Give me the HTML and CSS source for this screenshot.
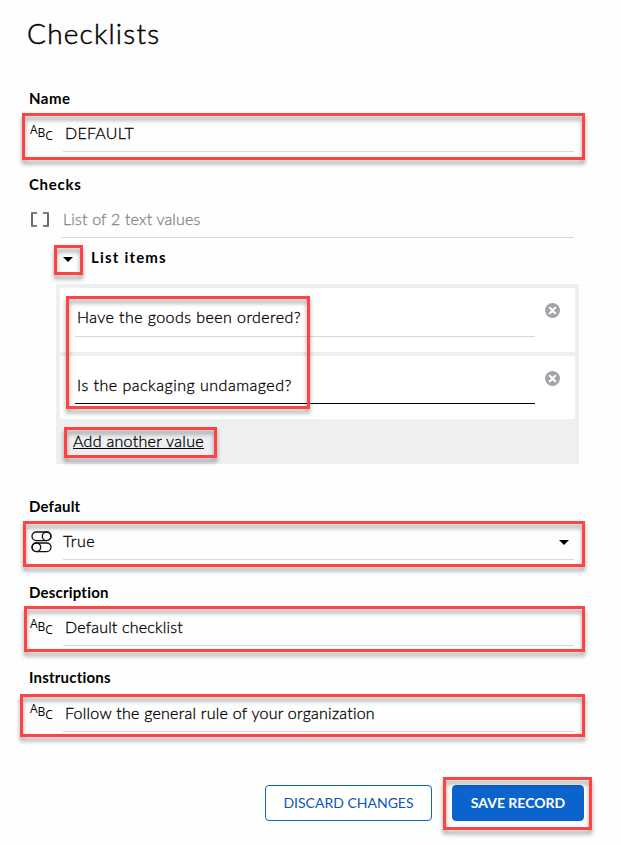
FILE: index.html
```html
<!DOCTYPE html>
<html lang="en">
<head>
<meta charset="utf-8">
<title>Checklists</title>
<link rel="stylesheet" href="styles.css">
</head>
<body>
<svg class="sprite" aria-hidden="true">
  <symbol id="remove" viewBox="0 0 15 15"><circle cx="7.5" cy="7.5" r="7.5" fill="#a2a4aa"/><path d="M4.8 4.8l5.4 5.4M10.2 4.8l-5.4 5.4" stroke="#fff" stroke-width="2.1" stroke-linecap="round"/></symbol>
  <symbol id="caret" viewBox="0 0 10 5"><path d="M0 0h10L5 5z"/></symbol>
</svg>
<main class="page">
  <h1 class="title">Checklists</h1>

  <section class="field name">
    <label class="label l-name">Name</label>
    <div class="row">
      <span class="icon abc"><i>A</i><i>B</i><i>C</i></span>
      <div class="input"><span class="t-default">DEFAULT</span></div>
    </div>
    <div class="mark mark-name"></div>
  </section>

  <section class="field checks">
    <label class="label l-checks">Checks</label>
    <div class="row">
      <span class="icon"><svg class="brackets" viewBox="0 0 18 15"><path d="M6 1H1v13h5M12 1h5v13h-5"/></svg></span>
      <div class="input tight muted"><span class="t-list">List of 2 text values</span></div>
    </div>
  </section>

  <div class="toggle">
    <svg class="caret"><use href="#caret"/></svg>
    <span class="t-items">List items</span>
    <div class="mark mark-toggle"></div>
  </div>

  <div class="list">
    <div class="item">
      <div class="value"><span class="t-have">Have the goods been ordered?</span></div>
      <svg class="remove"><use href="#remove"/></svg>
    </div>
    <div class="item last">
      <div class="value active"><span class="t-is">Is the packaging undamaged?</span></div>
      <svg class="remove"><use href="#remove"/></svg>
    </div>
    <a class="add"><span class="t-add">Add another value</span></a>
    <div class="mark mark-values"></div>
    <div class="mark mark-add"></div>
  </div>

  <section class="field default">
    <label class="label l-default">Default</label>
    <div class="row">
      <span class="icon"><svg class="switches" viewBox="0 0 21 22"><rect x="1" y="1" width="19" height="8.6" rx="4.3"/><circle cx="15.6" cy="5.3" r="4.3"/><rect x="1" y="12" width="19" height="8.6" rx="4.3"/><circle cx="5.4" cy="16.3" r="4.3"/></svg></span>
      <div class="input select"><span class="t-true">True</span><svg class="caret"><use href="#caret"/></svg></div>
    </div>
    <div class="mark mark-default"></div>
  </section>

  <section class="field description">
    <label class="label l-desc">Description</label>
    <div class="row">
      <span class="icon abc"><i>A</i><i>B</i><i>C</i></span>
      <div class="input"><span class="t-desc">Default checklist</span></div>
    </div>
    <div class="mark mark-desc"></div>
  </section>

  <section class="field instructions">
    <label class="label l-instr">Instructions</label>
    <div class="row">
      <span class="icon abc"><i>A</i><i>B</i><i>C</i></span>
      <div class="input"><span class="t-follow">Follow the general rule of your organization</span></div>
    </div>
    <div class="mark mark-instr"></div>
  </section>

  <div class="actions">
    <button class="btn discard">DISCARD CHANGES</button>
    <button class="btn save">SAVE RECORD</button>
    <div class="mark mark-save"></div>
  </div>
</main>
</body>
</html>
```
FILE: styles.css
```css
* { box-sizing: border-box; }
body { margin: 0; background: #fefefe; color: #000; font: 300 16px/20px Lato, "Open Sans", sans-serif; white-space: nowrap; }
.sprite { display: none; }
.page { width: 621px; height: 845px; overflow: hidden; display: flex; flex-direction: column; }
.title { margin: 13px 0 35px 27px; height: 40px; font-size: 28px; line-height: 40px; font-weight: 300; letter-spacing: 1.2px; -webkit-text-stroke: 0.5px #000; }

.field { position: relative; flex: none; margin: 0 47px 22px 29px; }
.label { display: block; height: 20px; font-size: 15px; font-weight: 700; letter-spacing: 0.2px; }
.l-name { letter-spacing: 0.5px; }
.l-checks { letter-spacing: 0.7px; }
.row { display: flex; height: 44px; }
.icon { width: 34px; flex: none; padding-top: 15px; }
.input { flex: 1; padding: 15px 0 0 2px; border-bottom: 1px solid #d8d8db; }
.tight { margin-left: -2px; }
.muted { color: #858585; }
.input span, .value span, .add span { -webkit-text-stroke: 0.3px currentColor; }

.t-default { letter-spacing: 0.25px; }
.t-list { letter-spacing: 0.17px; }
.t-add { letter-spacing: 0.3px; }
.t-desc { letter-spacing: 0.18px; }
.t-follow { letter-spacing: 0.25px; }
.t-true { letter-spacing: 0.5px; }
.t-have { letter-spacing: 0.43px; }
.t-is { letter-spacing: 0.5px; }
.t-items { letter-spacing: 1.2px; }

.abc { display: flex; padding-left: 1px; font: 400 12px/16px "Open Sans", sans-serif; }
.abc i { font-style: normal; }
.abc i:nth-child(1) { margin-top: -1px; }
.abc i:nth-child(2) { margin-top: 2px; }
.abc i:nth-child(3) { margin-top: 5px; }
.brackets { display: block; width: 18px; height: 15px; margin: 3px 0 0 2px; fill: none; stroke: #555; stroke-width: 1.7; }
.switches { display: block; width: 21px; height: 22px; margin: 0 0 0 2px; fill: none; stroke: #111; stroke-width: 1.3; }
.caret { display: block; width: 10px; height: 5px; }

.checks { margin-bottom: 0; }
.toggle { position: relative; display: flex; align-items: center; gap: 18px; height: 46px; padding: 0 0 7px 63px; font-size: 15px; font-weight: 700; }
.toggle .caret { margin-top: 4px; }
.t-items { margin-top: -1px; }

.list { position: relative; width: 523px; height: 180px; margin: 0 0 32px 56px; padding: 4px; background: #eeeff1; }
.item { display: flex; gap: 10px; height: 64px; margin-bottom: 4px; padding-left: 15px; background: #fff; }
.item.last { height: 63px; margin-bottom: 0; }
.value { width: 460px; height: 49px; padding: 19px 0 0 2px; border-bottom: 1px solid #d8d8db; }
.value.active { height: 48px; border-color: #000; }
.remove { width: 15px; height: 15px; margin-top: 15px; }
.add { display: block; padding: 12px 0 0 13px; text-decoration: underline; text-decoration-thickness: 1px; text-underline-offset: 1px; text-decoration-skip-ink: none; }

.default { margin-bottom: 22px; }
.description { margin-bottom: 21px; }
.instructions { margin-bottom: 53px; }
.instructions .row { height: 45px; }
.instructions .input { padding-top: 16px; }
.select { display: flex; justify-content: space-between; padding: 15px 5px 0 0; }
.select .caret { margin-top: 9px; }

.actions { position: relative; display: flex; gap: 20px; padding-left: 265px; }
.btn { height: 36px; padding: 0; border: 1px solid #0b63ce; border-radius: 4px; font: 400 14px/34px Lato, sans-serif; }
.discard { width: 167px; background: #fff; color: #0b55b5; }
.save { width: 132px; background: #0b63ce; color: #fff; font-weight: 700; }

.mark { position: absolute; border: 3px solid #ff4343; filter: drop-shadow(0 4px 2px rgba(0, 0, 0, 0.38)); pointer-events: none; }
.mark-name { left: -7px; top: 25px; width: 563px; height: 47px; }
.mark-toggle { left: 54px; top: 7px; width: 29px; height: 30px; }
.mark-values { left: 10px; top: 12px; width: 244px; height: 113px; }
.mark-add { left: 8px; top: 143px; width: 153px; height: 31px; }
.mark-default { left: -6px; top: 25px; width: 562px; height: 46px; }
.mark-desc { left: -5px; top: 24px; width: 561px; height: 46px; }
.mark-instr { left: -9px; top: 27px; width: 565px; height: 43px; }
.mark-save { left: 443px; top: -8px; width: 149px; height: 53px; }
```
